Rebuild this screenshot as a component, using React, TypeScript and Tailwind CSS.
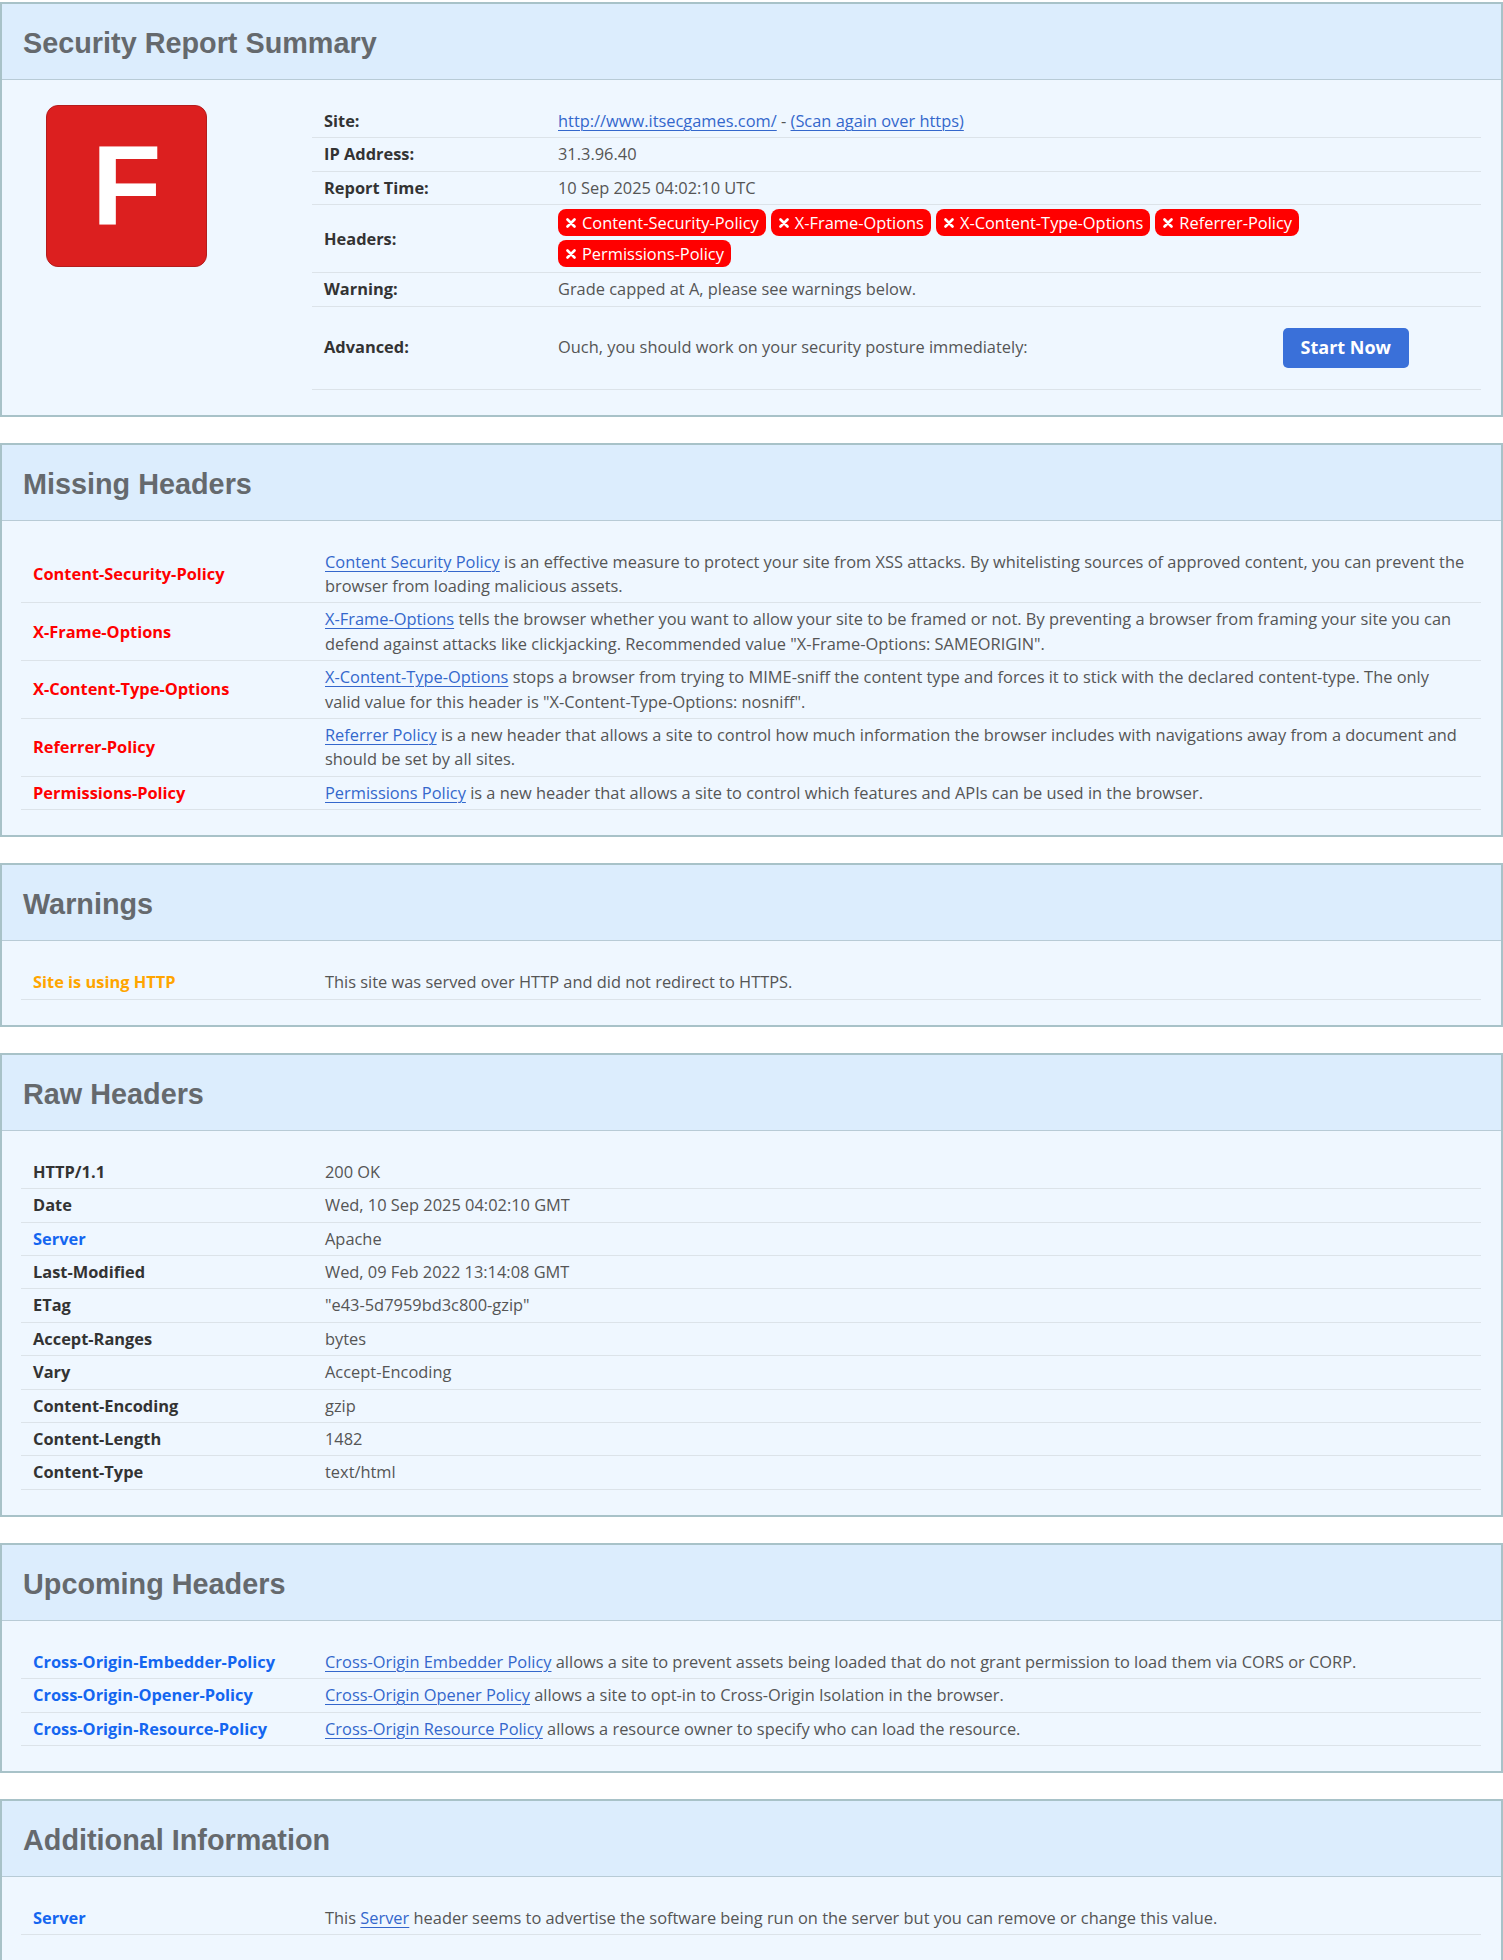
import React from "react";

const LINK = "text-[#3467cc] underline underline-offset-[3px] decoration-[1px]";

function XIcon() {
  return (
    <svg width="10" height="10" viewBox="0 0 10 10" className="shrink-0">
      <path d="M1.5 1.5 L8.5 8.5 M8.5 1.5 L1.5 8.5" stroke="white" strokeWidth="2.6" strokeLinecap="round" />
    </svg>
  );
}

function Badge({ text }: { text: string }) {
  return (
    <span className="inline-flex h-[27px] items-center gap-[6px] rounded-[8px] bg-[#ff0000] pl-[8px] pr-[7px] text-[16.4px] leading-none text-white">
      <XIcon />
      {text}
    </span>
  );
}

function Section({ title, children }: { title: string; children: React.ReactNode }) {
  return (
    <section className="mb-[26px] border-2 border-[#a8c2c8] bg-[#eff7ff]">
      <div className="flex h-[76px] items-center border-b border-[#b8cbd6] bg-[#dcedfd] px-[21px] pt-[4px]">
        <h2 className="font-['Liberation_Sans',Arial,sans-serif] text-[28.8px] font-bold leading-none text-[#65696d]">
          {title}
        </h2>
      </div>
      <div className="pl-[19px] pr-[20px] pt-[25px] pb-[25px]">{children}</div>
    </section>
  );
}

function Row({
  label,
  labelClass = "text-[#333333]",
  children,
}: {
  label: string;
  labelClass?: string;
  children: React.ReactNode;
}) {
  return (
    <div className="flex border-b border-[#dce3e9]">
      <div className={`flex w-[292px] shrink-0 items-center px-[12px] py-[4px] font-bold ${labelClass}`}>{label}</div>
      <div className="min-w-0 flex-1 pl-[12px] pr-[15px] py-[4px] text-[#555555]">{children}</div>
    </div>
  );
}

function SumRow({ label, children, cellClass = "py-[4px]" }: { label: string; children: React.ReactNode; cellClass?: string }) {
  return (
    <div className="flex border-b border-[#dce3e9]">
      <div className="flex w-[234px] shrink-0 items-center px-[12px] py-[4px] font-bold text-[#333333]">{label}</div>
      <div className={`flex min-w-0 flex-1 items-center px-[12px] text-[#555555] ${cellClass}`}>{children}</div>
    </div>
  );
}

export default function App() {
  const missing: [string, string, string][] = [
    [
      "Content-Security-Policy",
      "Content Security Policy",
      " is an effective measure to protect your site from XSS attacks. By whitelisting sources of approved content, you can prevent the browser from loading malicious assets.",
    ],
    [
      "X-Frame-Options",
      "X-Frame-Options",
      ' tells the browser whether you want to allow your site to be framed or not. By preventing a browser from framing your site you can defend against attacks like clickjacking. Recommended value "X-Frame-Options: SAMEORIGIN".',
    ],
    [
      "X-Content-Type-Options",
      "X-Content-Type-Options",
      ' stops a browser from trying to MIME-sniff the content type and forces it to stick with the declared content-type. The only valid value for this header is "X-Content-Type-Options: nosniff".',
    ],
    [
      "Referrer-Policy",
      "Referrer Policy",
      " is a new header that allows a site to control how much information the browser includes with navigations away from a document and should be set by all sites.",
    ],
    [
      "Permissions-Policy",
      "Permissions Policy",
      " is a new header that allows a site to control which features and APIs can be used in the browser.",
    ],
  ];

  const raw: [string, string][] = [
    ["HTTP/1.1", "200 OK"],
    ["Date", "Wed, 10 Sep 2025 04:02:10 GMT"],
    ["Server", "Apache"],
    ["Last-Modified", "Wed, 09 Feb 2022 13:14:08 GMT"],
    ["ETag", '"e43-5d7959bd3c800-gzip"'],
    ["Accept-Ranges", "bytes"],
    ["Vary", "Accept-Encoding"],
    ["Content-Encoding", "gzip"],
    ["Content-Length", "1482"],
    ["Content-Type", "text/html"],
  ];

  const upcoming: [string, string, string][] = [
    [
      "Cross-Origin-Embedder-Policy",
      "Cross-Origin Embedder Policy",
      " allows a site to prevent assets being loaded that do not grant permission to load them via CORS or CORP.",
    ],
    ["Cross-Origin-Opener-Policy", "Cross-Origin Opener Policy", " allows a site to opt-in to Cross-Origin Isolation in the browser."],
    ["Cross-Origin-Resource-Policy", "Cross-Origin Resource Policy", " allows a resource owner to specify who can load the resource."],
  ];

  return (
    <div className="min-h-screen bg-white pt-[2px] font-['Open_Sans','Noto_Sans',sans-serif] text-[16.4px] leading-[24.4px]">
      <Section title="Security Report Summary">
        <div className="flex">
          <div className="w-[291px] shrink-0 pl-[25px]">
            <div className="flex h-[162px] w-[161px] items-center justify-center rounded-[12px] border border-[#b51c1c] bg-[#dc1f1f]">
              <span className="font-['Liberation_Sans',Arial,sans-serif] text-[114px] font-bold leading-none text-white">F</span>
            </div>
          </div>
          <div className="min-w-0 flex-1">
            <SumRow label="Site:">
              <span>
                <a className={LINK}>http://www.itsecgames.com/</a> - <a className={LINK}>(Scan again over https)</a>
              </span>
            </SumRow>
            <SumRow label="IP Address:">31.3.96.40</SumRow>
            <SumRow label="Report Time:">10 Sep 2025 04:02:10 UTC</SumRow>
            <SumRow label="Headers:" cellClass="pt-[4px] pb-[5px]">
              <div className="flex flex-wrap gap-x-[5px] gap-y-[4px]">
                <Badge text="Content-Security-Policy" />
                <Badge text="X-Frame-Options" />
                <Badge text="X-Content-Type-Options" />
                <Badge text="Referrer-Policy" />
                <Badge text="Permissions-Policy" />
              </div>
            </SumRow>
            <SumRow label="Warning:">Grade capped at A, please see warnings below.</SumRow>
            <SumRow label="Advanced:" cellClass="py-[21px] justify-between pr-[72px]">
              <span>Ouch, you should work on your security posture immediately:</span>
              <button className="h-[40px] rounded-[5px] bg-[#3a70d9] px-[18px] text-[18px] font-bold text-white">
                Start Now
              </button>
            </SumRow>
          </div>
        </div>
      </Section>

      <Section title="Missing Headers">
        {missing.map(([label, link, rest]) => (
          <Row key={label} label={label} labelClass="text-[#ff0000]">
            <a className={LINK}>{link}</a>
            {rest}
          </Row>
        ))}
      </Section>

      <Section title="Warnings">
        <Row label="Site is using HTTP" labelClass="text-[#ffa500]">
          This site was served over HTTP and did not redirect to HTTPS.
        </Row>
      </Section>

      <Section title="Raw Headers">
        {raw.map(([k, v]) => (
          <Row key={k} label={k} labelClass={k === "Server" ? "text-[#1466f0]" : "text-[#333333]"}>
            {v}
          </Row>
        ))}
      </Section>

      <Section title="Upcoming Headers">
        {upcoming.map(([label, link, rest]) => (
          <Row key={label} label={label} labelClass="text-[#1466f0]">
            <a className={LINK}>{link}</a>
            {rest}
          </Row>
        ))}
      </Section>

      <Section title="Additional Information">
        <Row label="Server" labelClass="text-[#1466f0]">
          This <a className={LINK}>Server</a> header seems to advertise the software being run on the server but you can remove or
          change this value.
        </Row>
      </Section>
    </div>
  );
}
